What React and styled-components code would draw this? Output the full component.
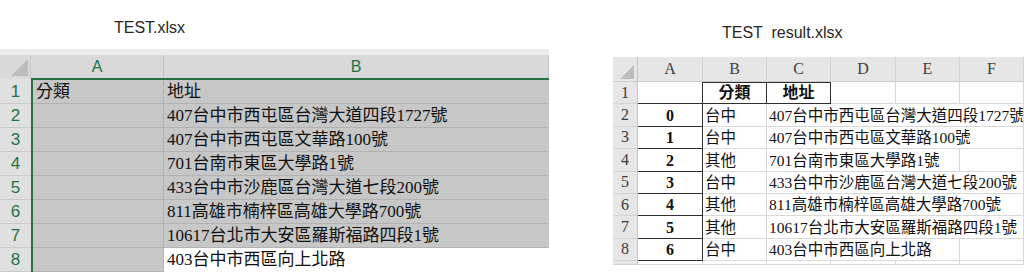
import React from 'react'
import styled, { createGlobalStyle } from 'styled-components'

const GlobalStyle = createGlobalStyle`
  html, body {
    margin: 0;
    padding: 0;
    background: #fff;
  }
  body {
    width: 1024px;
    height: 272px;
    overflow: hidden;
  }
`

const UI = `"Liberation Sans", Arial, sans-serif`
const SHEET = `"Liberation Serif", "Noto Sans CJK TC", serif`
const EXCEL_GREEN = '#217346'
const INK = '#2e2e2e'
const RIGHT_COLS = '25px 65px 64px 64px 65px 64px 64px'

const Page = styled.div`
  display: flex;
  gap: 64px;
  width: 1024px;
  height: 272px;
  overflow: hidden;
`

const Pane = styled.div`
  display: flex;
  flex-direction: column;
  flex: ${p => (p.$width ? `0 0 ${p.$width}px` : '1 1 auto')};
  min-width: 0;
  overflow: hidden;
`

const FileTitle = styled.div`
  box-sizing: border-box;
  height: ${p => p.$height}px;
  padding: ${p => p.$top}px 0 0 ${p => p.$indent}px;
  font: 16px/20px ${UI};
  color: #262626;
  white-space: pre;
`

const Corner = styled.div`
  display: flex;
  align-items: flex-end;
  justify-content: flex-end;
  box-sizing: border-box;
  padding: 0 ${p => p.$padRight}px 2px 0;
  border-right: 1px solid ${p => p.$line};
`

const Triangle = styled.span`
  width: ${p => p.$size}px;
  height: ${p => p.$size}px;
  background: ${p => p.$color};
  clip-path: polygon(100% 0, 100% 100%, 0 100%);
`

/* ---- original workbook (selected range A1:B8) ---- */

const Strip = styled.div`
  height: 6px;
  background: #ececec;
`

const LeftHead = styled.div`
  display: grid;
  grid-template-columns: 31px 133px 1fr;
  height: 23px;
  background: #d9d9d9;
`

const LeftColHead = styled.div`
  display: flex;
  align-items: center;
  justify-content: center;
  border-right: 1px solid #c4c4c4;
  font: 16px ${UI};
  color: ${EXCEL_GREEN};
`

const LeftBody = styled.div`
  display: flex;
  flex: 1;
`

const LeftRowHeads = styled.div`
  display: flex;
  flex-direction: column;
  width: 31px;
  padding-top: 2px;
  background: #e0e0e0;
`

const LeftRowHead = styled.div`
  display: flex;
  align-items: center;
  justify-content: center;
  box-sizing: border-box;
  height: 24px;
  flex: none;
  border-bottom: 1px solid #cacaca;
  font: 17px ${UI};
  color: ${EXCEL_GREEN};
`

const Selection = styled.div`
  flex: 1;
  display: grid;
  grid-template-columns: 131px 1fr;
  grid-auto-rows: 24px;
  border-top: 2px solid ${EXCEL_GREEN};
  border-left: 2px solid ${EXCEL_GREEN};
`

const LeftCell = styled.div`
  display: flex;
  align-items: center;
  box-sizing: border-box;
  padding-left: 3px;
  background: ${p => (p.$active ? '#fff' : '#c7c7c7')};
  border-bottom: 1px solid ${p => (p.$active ? '#fff' : '#b2b2b2')};
  border-right: 1px solid ${p => (p.$edge ? 'transparent' : '#b2b2b2')};
  font: 17px/20px ${SHEET};
  color: #111;
  white-space: nowrap;
  overflow: hidden;
`

/* ---- pandas output workbook ---- */

const RightHead = styled.div`
  display: grid;
  grid-template-columns: ${RIGHT_COLS};
  box-sizing: border-box;
  height: 25px;
  background: #e6e6e6;
  border-bottom: 1px solid #cdcdcd;
`

const RightColHead = styled.div`
  display: flex;
  align-items: center;
  justify-content: center;
  border-right: 1px solid #d2d2d2;
  font: 16px ${SHEET};
  color: #404040;
`

const RightRow = styled.div`
  display: grid;
  grid-template-columns: ${RIGHT_COLS};
  height: ${p => p.$height}px;
  flex: none;
  overflow: hidden;
`

const RowNum = styled.div`
  display: flex;
  align-items: center;
  justify-content: center;
  box-sizing: border-box;
  background: #e6e6e6;
  border-right: 1px solid #c4c4c4;
  border-bottom: 1px solid #d3d3d3;
  font: 16px ${SHEET};
  color: #3a3a3a;
`

const SheetCell = styled.div`
  grid-column: span ${p => p.$span || 1};
  display: flex;
  align-items: flex-end;
  justify-content: ${p => (p.$center ? 'center' : 'flex-start')};
  box-sizing: border-box;
  padding: 0 2px 1px;
  border-right: 1px solid ${p => (p.$ink ? INK : '#d9d9d9')};
  border-bottom: 1px solid ${p => (p.$ink ? INK : '#d9d9d9')};
  box-shadow: ${p => (p.$capped ? `inset 0 1px 0 ${INK}` : 'none')};
  font: ${p => (p.$bold ? 700 : 400)} ${p => (p.$bold ? 16 : 15.5)}px/18px ${SHEET};
  color: #111;
  white-space: nowrap;
  overflow: hidden;
`

const addresses = [
  '407台中市西屯區台灣大道四段1727號',
  '407台中市西屯區文華路100號',
  '701台南市東區大學路1號',
  '433台中市沙鹿區台灣大道七段200號',
  '811高雄市楠梓區高雄大學路700號',
  '10617台北市大安區羅斯福路四段1號',
  '403台中市西區向上北路'
]

const results = [
  { cat: '台中', span: 4 },
  { cat: '台中', span: 4 },
  { cat: '其他', span: 3 },
  { cat: '台中', span: 4 },
  { cat: '其他', span: 4 },
  { cat: '其他', span: 4 },
  { cat: '台中', span: 3 }
]

function SourceSheet () {
  const cells = [['分類', '地址'], ...addresses.map(a => ['', a])]
  return (
    <>
      <Strip />
      <LeftHead>
        <Corner $padRight={2} $line='#c9c9c9'>
          <Triangle $size={17} $color='#bcbcbc' />
        </Corner>
        <LeftColHead>A</LeftColHead>
        <LeftColHead>B</LeftColHead>
      </LeftHead>
      <LeftBody>
        <LeftRowHeads>
          {cells.map((_, i) => <LeftRowHead key={i}>{i + 1}</LeftRowHead>)}
        </LeftRowHeads>
        <Selection>
          {cells.map((row, i) => (
            <React.Fragment key={i}>
              <LeftCell>{row[0]}</LeftCell>
              <LeftCell $edge $active={i === cells.length - 1}>{row[1]}</LeftCell>
            </React.Fragment>
          ))}
        </Selection>
      </LeftBody>
    </>
  )
}

function ResultSheet () {
  return (
    <>
      <RightHead>
        <Corner $padRight={3} $line='#c4c4c4'>
          <Triangle $size={14} $color='#bdbdbd' />
        </Corner>
        {['A', 'B', 'C', 'D', 'E', 'F'].map(c => <RightColHead key={c}>{c}</RightColHead>)}
      </RightHead>
      <RightRow $height={22.4}>
        <RowNum>1</RowNum>
        <SheetCell $ink />
        <SheetCell $ink $capped $bold $center>分類</SheetCell>
        <SheetCell $ink $capped $bold $center>地址</SheetCell>
        <SheetCell />
        <SheetCell />
        <SheetCell />
      </RightRow>
      {results.map((r, i) => (
        <RightRow key={i} $height={22.4}>
          <RowNum>{i + 2}</RowNum>
          <SheetCell $ink $bold $center>{i}</SheetCell>
          <SheetCell>{r.cat}</SheetCell>
          <SheetCell $span={r.span}>{addresses[i]}</SheetCell>
          {r.span < 4 && <SheetCell />}
        </RightRow>
      ))}
      <RightRow $height={4}>
        <RowNum />
        <SheetCell />
        <SheetCell />
        <SheetCell />
        <SheetCell />
        <SheetCell />
        <SheetCell />
      </RightRow>
    </>
  )
}

export default function App () {
  return (
    <>
      <GlobalStyle />
      <Page>
        <Pane $width={549}>
          <FileTitle $height={50} $top={18} $indent={114}>TEST.xlsx</FileTitle>
          <SourceSheet />
        </Pane>
        <Pane>
          <FileTitle $height={57} $top={23} $indent={109}>{'TEST  result.xlsx'}</FileTitle>
          <ResultSheet />
        </Pane>
      </Page>
    </>
  )
}
